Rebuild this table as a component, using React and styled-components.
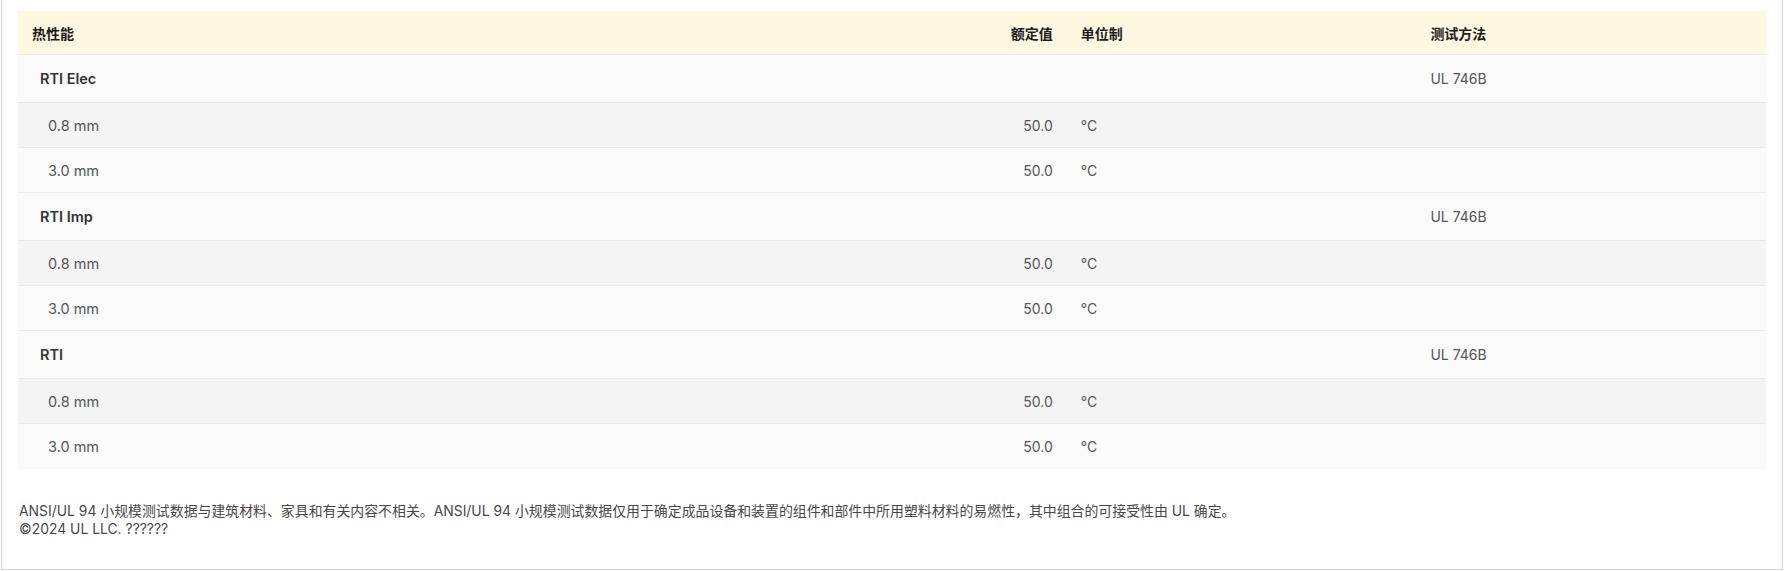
import React from "react";
import styled, { createGlobalStyle } from "styled-components";

const GlobalStyle = createGlobalStyle`
  html, body {
    margin: 0;
    padding: 0;
    background: #ffffff;
  }
  body {
    font-family: Inter, "Noto Sans CJK SC", sans-serif;
    color: #444;
  }
`;

const rows = [
  {
    name: "RTI Elec",
    method: "UL 746B",
    items: [
      { name: "0.8 mm", value: "50.0", unit: "°C" },
      { name: "3.0 mm", value: "50.0", unit: "°C" },
    ],
  },
  {
    name: "RTI Imp",
    method: "UL 746B",
    items: [
      { name: "0.8 mm", value: "50.0", unit: "°C" },
      { name: "3.0 mm", value: "50.0", unit: "°C" },
    ],
  },
  {
    name: "RTI",
    method: "UL 746B",
    items: [
      { name: "0.8 mm", value: "50.0", unit: "°C" },
      { name: "3.0 mm", value: "50.0", unit: "°C" },
    ],
  },
];

export default function App() {
  return (
    <>
      <GlobalStyle />
      <Frame>
        <Table>
          <colgroup>
            <col style={{ width: "40%" }} />
            <col style={{ width: "20%" }} />
            <col style={{ width: "20%" }} />
            <col style={{ width: "20%" }} />
          </colgroup>
          <thead>
            <HeadRow>
              <HeadCell>热性能</HeadCell>
              <HeadCell $right>额定值</HeadCell>
              <HeadCell>单位制</HeadCell>
              <HeadCell>测试方法</HeadCell>
            </HeadRow>
          </thead>
          <tbody>
            {rows.map((group, gi) => (
              <React.Fragment key={group.name}>
                <GroupRow>
                  <GroupName>{group.name}</GroupName>
                  <Cell />
                  <Cell />
                  <Cell>{group.method}</Cell>
                </GroupRow>
                {group.items.map((item, i) => (
                  <SubRow
                    key={item.name}
                    $shade={i % 2 === 0}
                    $last={gi === rows.length - 1 && i === group.items.length - 1}
                  >
                    <SubName>{item.name}</SubName>
                    <Cell $right>{item.value}</Cell>
                    <Cell>{item.unit}</Cell>
                    <Cell />
                  </SubRow>
                ))}
              </React.Fragment>
            ))}
          </tbody>
        </Table>
        <Footnote>
          <p>
            ANSI/UL 94 小规模测试数据与建筑材料、家具和有关内容不相关。ANSI/UL 94
            小规模测试数据仅用于确定成品设备和装置的组件和部件中所用塑料材料的易燃性，其中组合的可接受性由 UL 确定。
          </p>
          <p>©2024 UL LLC. ??????</p>
        </Footnote>
      </Frame>
    </>
  );
}

const Frame = styled.div`
  box-sizing: border-box;
  width: 1782px;
  height: 570px;
  margin-left: 1px;
  padding: 11px 16px 0 16px;
  border: 1px solid #cfcfcf;
  border-top: none;
  display: flex;
  flex-direction: column;
`;

const Table = styled.table`
  width: 100%;
  border-collapse: collapse;
  table-layout: fixed;
  font-size: 14px;
`;

const HeadRow = styled.tr`
  background: #fef8e0;
  border-bottom: 1px solid #f3ecd4;
`;

const HeadCell = styled.th`
  height: 43px;
  padding: 0 14px;
  text-align: ${(p) => (p.$right ? "right" : "left")};
  font-weight: 700;
  font-size: 14px;
  color: #1c1c1c;
  font-family: Inter, "Noto Sans CJK SC", sans-serif;
`;

const GroupRow = styled.tr`
  background: #fafafa;
  border-bottom: 1px solid #e8e8e8;
  height: 48px;
`;

const SubRow = styled.tr`
  background: ${(p) => (p.$shade ? "#f4f4f4" : "#fafafa")};
  border-bottom: ${(p) => (p.$last ? "none" : "1px solid #eaeaea")};
  height: 45px;
`;

const Cell = styled.td`
  padding: 0 14px;
  text-align: ${(p) => (p.$right ? "right" : "left")};
  color: #555;
  font-size: 14px;
  vertical-align: middle;
`;

const GroupName = styled.td`
  padding: 0 14px 0 22px;
  font-weight: 600;
  font-size: 14.5px;
  color: #333;
`;

const SubName = styled.td`
  padding: 0 14px 0 30px;
  color: #555;
  font-size: 14.5px;
`;

const Footnote = styled.div`
  margin-top: 33px;
  padding-left: 1px;
  font-size: 13.9px;
  line-height: 18px;
  color: #474747;

  p {
    margin: 0;
  }
`;
